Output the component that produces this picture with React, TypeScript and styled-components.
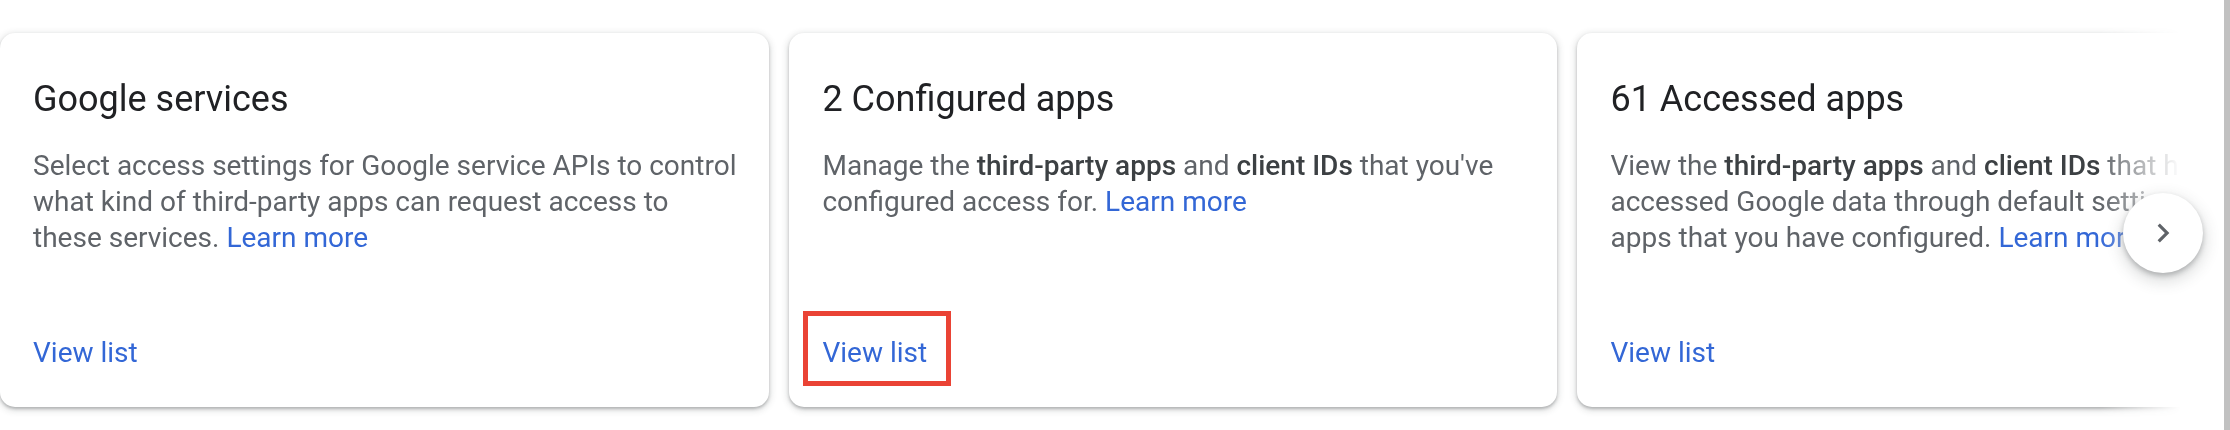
import React from "react";
import styled, { createGlobalStyle } from "styled-components";

const GlobalStyle = createGlobalStyle`
  html, body {
    margin: 0;
    padding: 0;
    background: #ffffff;
    font-family: Roboto, "Liberation Sans", Arial, sans-serif;
  }
`;

const Page = styled.div`
  display: flex;
  width: 2230px;
  height: 430px;
  overflow: hidden;
  background: #ffffff;
`;

const Carousel = styled.div`
  position: relative;
  flex: 1;
  min-width: 0;
`;

const Viewport = styled.div`
  margin-right: 44px;
  overflow: hidden;
  padding: 33px 0 20px;
  -webkit-mask-image: linear-gradient(to right, #000 calc(100% - 80px), transparent 100%);
  mask-image: linear-gradient(to right, #000 calc(100% - 80px), transparent 100%);
`;

const Track = styled.div`
  display: flex;
  gap: 20px;
`;

const Card = styled.section`
  flex: 0 0 768px;
  height: 374px;
  box-sizing: border-box;
  padding: 44px 33px 36px;
  border-radius: 15px;
  background: #ffffff;
  box-shadow: 0 2px 3px rgba(60, 64, 67, 0.3), 0 2px 6px 2px rgba(60, 64, 67, 0.15);
  display: flex;
  flex-direction: column;
`;

const Title = styled.h2`
  margin: 0;
  font-size: 36px;
  line-height: 44px;
  font-weight: 400;
  color: #202124;
`;

const Description = styled.p`
  margin: 27px 0 0;
  font-size: 28px;
  line-height: 36px;
  color: #5f6368;
  white-space: nowrap;
`;

const Strong = styled.b`
  font-weight: 500;
  color: #3c4043;
`;

const Link = styled.a<{ $highlighted?: boolean }>`
  position: relative;
  color: #3367d6;
  text-decoration: none;
  cursor: pointer;

  ${(p) =>
    p.$highlighted &&
    `
    &::after {
      content: "";
      position: absolute;
      left: -19px;
      right: -24px;
      top: -25px;
      bottom: -17px;
      border: 5px solid #ea4335;
      box-sizing: border-box;
      pointer-events: none;
    }
  `}
`;

const Footer = styled.div`
  margin-top: auto;
  font-size: 28px;
  line-height: 36px;
`;

const ArrowButton = styled.button`
  position: absolute;
  left: 2123px;
  top: 193px;
  width: 80px;
  height: 80px;
  border-radius: 50%;
  border: none;
  background: #ffffff;
  box-shadow: 0 3px 5px rgba(60, 64, 67, 0.3), 0 6px 14px 4px rgba(60, 64, 67, 0.15);
  display: flex;
  align-items: center;
  justify-content: center;
  padding: 0;
  cursor: pointer;
`;

const Scrollbar = styled.div`
  flex: 0 0 6px;
  background: #c1c1c1;
`;

const ChevronRight = () => (
  <svg width="38" height="38" viewBox="0 0 24 24" aria-hidden="true">
    <path d="M10 6L8.59 7.41 13.17 12l-4.58 4.59L10 18l6-6z" fill="#5f6368" />
  </svg>
);

export default function App() {
  return (
    <>
      <GlobalStyle />
      <Page>
        <Carousel>
          <Viewport>
            <Track>
              <Card>
                <Title>Google services</Title>
                <Description>
                  Select access settings for Google service APIs to control
                  <br />
                  what kind of third-party apps can request access to
                  <br />
                  these services. <Link>Learn more</Link>
                </Description>
                <Footer>
                  <Link>View list</Link>
                </Footer>
              </Card>
              <Card>
                <Title>2 Configured apps</Title>
                <Description>
                  Manage the <Strong>third-party apps</Strong> and <Strong>client IDs</Strong> that you've
                  <br />
                  configured access for. <Link>Learn more</Link>
                </Description>
                <Footer>
                  <Link $highlighted>View list</Link>
                </Footer>
              </Card>
              <Card>
                <Title>61 Accessed apps</Title>
                <Description>
                  View the <Strong>third-party apps</Strong> and <Strong>client IDs</Strong> that have
                  <br />
                  accessed Google data through default settings or
                  <br />
                  apps that you have configured. <Link>Learn more</Link>
                </Description>
                <Footer>
                  <Link>View list</Link>
                </Footer>
              </Card>
            </Track>
          </Viewport>
          <ArrowButton aria-label="Next">
            <ChevronRight />
          </ArrowButton>
        </Carousel>
        <Scrollbar />
      </Page>
    </>
  );
}
